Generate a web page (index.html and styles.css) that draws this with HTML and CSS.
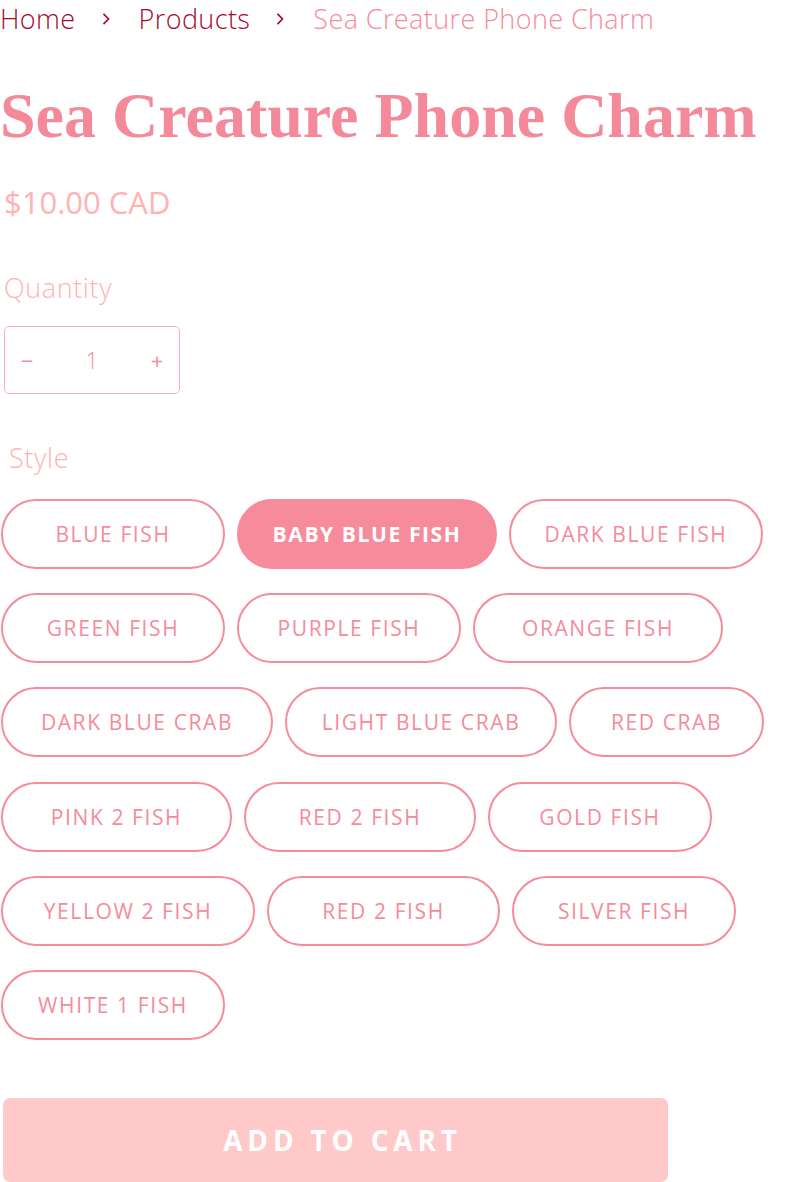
FILE: index.html
```html
<!DOCTYPE html>
<html lang="en">
<head>
<meta charset="utf-8">
<title>Sea Creature Phone Charm</title>
<link rel="stylesheet" href="styles.css">
</head>
<body>
<main class="product">
  <nav class="crumbs">
    <a class="crumb-link" href="#">Home</a>
    <svg class="chev" viewBox="0 0 10 14" width="10" height="14"><path d="M2.5 1.8 L7.5 7 L2.5 12.2" fill="none" stroke="currentColor" stroke-width="1.7"/></svg>
    <a class="crumb-link" href="#">Products</a>
    <svg class="chev" viewBox="0 0 10 14" width="10" height="14"><path d="M2.5 1.8 L7.5 7 L2.5 12.2" fill="none" stroke="currentColor" stroke-width="1.7"/></svg>
    <span class="crumb-current">Sea Creature Phone Charm</span>
  </nav>

  <h1 class="title">Sea Creature Phone Charm</h1>
  <p class="price">$10.00 CAD</p>

  <p class="label qty-label">Quantity</p>
  <div class="qty">
    <button class="qty-btn">&minus;</button>
    <span class="qty-val">1</span>
    <button class="qty-btn">+</button>
  </div>

  <p class="label style-label">Style</p>
  <div class="pills">
    <button class="pill w224">Blue Fish</button>
    <button class="pill w260 active">Baby Blue Fish</button>
    <button class="pill w254">Dark Blue Fish</button>
    <button class="pill w224">Green Fish</button>
    <button class="pill w224">Purple Fish</button>
    <button class="pill w250">Orange Fish</button>
    <button class="pill w272">Dark Blue Crab</button>
    <button class="pill w272">Light Blue Crab</button>
    <button class="pill w195">Red Crab</button>
    <button class="pill w231">Pink 2 Fish</button>
    <button class="pill w232">Red 2 Fish</button>
    <button class="pill w224">Gold Fish</button>
    <button class="pill w254">Yellow 2 Fish</button>
    <button class="pill w233">Red 2 Fish</button>
    <button class="pill w224">Silver Fish</button>
    <button class="pill w224">White 1 Fish</button>
  </div>

  <button class="cart">Add to cart</button>
</main>
</body>
</html>
```

FILE: styles.css
```css
* { box-sizing: border-box; }
html, body { margin: 0; padding: 0; background: #fff; }
body { font-family: "Open Sans", "Noto Sans", sans-serif; font-weight: 300; }

.product { width: 797px; }

.crumbs {
  display: flex;
  align-items: center;
  height: 38px;
  font-size: 27px;
  letter-spacing: 0.4px;
  line-height: 38px;
  white-space: nowrap;
}
.crumb-link { color: #a50d2c; text-decoration: none; }
.chev { color: #a50d2c; margin: 0 28px 0 25px; flex: none; }
.crumb-current { color: #f68c9b; }

.title {
  margin: 38px 0 0 0;
  font-family: "Liberation Serif", serif;
  font-weight: 700;
  font-size: 64px;
  line-height: 80px;
  color: #f48a99;
  white-space: nowrap;
}

.price {
  margin: 26px 0 0 4px;
  font-size: 31px;
  line-height: 40px;
  color: #ffb3b3;
  font-weight: 400;
}

.label {
  margin: 0;
  font-size: 27px;
  letter-spacing: 0.6px;
  line-height: 34px;
  color: #ffb3b3;
}
.qty-label { margin: 49px 0 0 4px; }

.qty {
  margin: 21px 0 0 4px;
  width: 176px;
  height: 68px;
  border: 1.5px solid #ffadb3;
  border-radius: 5px;
  display: flex;
  align-items: center;
  justify-content: space-between;
  padding: 0 10px;
}
.qty-btn {
  background: none;
  border: 0;
  font-family: inherit;
  font-size: 22px;
  color: #f78d9c;
  width: 24px;
  padding: 0;
}
.qty-val { font-size: 23px; color: #f78d9c; }

.style-label { margin: 47px 0 0 9px; }

.pills {
  margin: 24px 0 0 1px;
  display: flex;
  flex-wrap: wrap;
  align-items: flex-start;
  gap: 24.2px 12px;
  width: 780px;
}
.pill {
  height: 70px;
  border: 2px solid #f58b9b;
  border-radius: 35px;
  background: #fff;
  color: #f58b9b;
  font-family: "Open Sans", "Noto Sans", sans-serif;
  font-weight: 400;
  font-size: 21px;
  letter-spacing: 1.6px;
  text-transform: uppercase;
  padding: 0;
}
.pill.active {
  background: #f68c9b;
  border-color: #f68c9b;
  color: #fff;
  font-weight: 700;
}
.w195 { width: 195px; }
.w224 { width: 224px; }
.w231 { width: 231px; }
.w232 { width: 232px; }
.w233 { width: 233px; }
.w250 { width: 250px; }
.w254 { width: 254px; }
.w260 { width: 260px; }
.w272 { width: 272px; }

.cart {
  display: block;
  margin: 58px 0 0 3px;
  width: 665px;
  height: 84px;
  border: 0;
  border-radius: 7px;
  background: #ffc9c9;
  color: #fff;
  font-family: "Open Sans", "Noto Sans", sans-serif;
  font-weight: 700;
  font-size: 28px;
  letter-spacing: 4.8px;
  text-transform: uppercase;
  padding: 0 0 0 14px;
}
```
